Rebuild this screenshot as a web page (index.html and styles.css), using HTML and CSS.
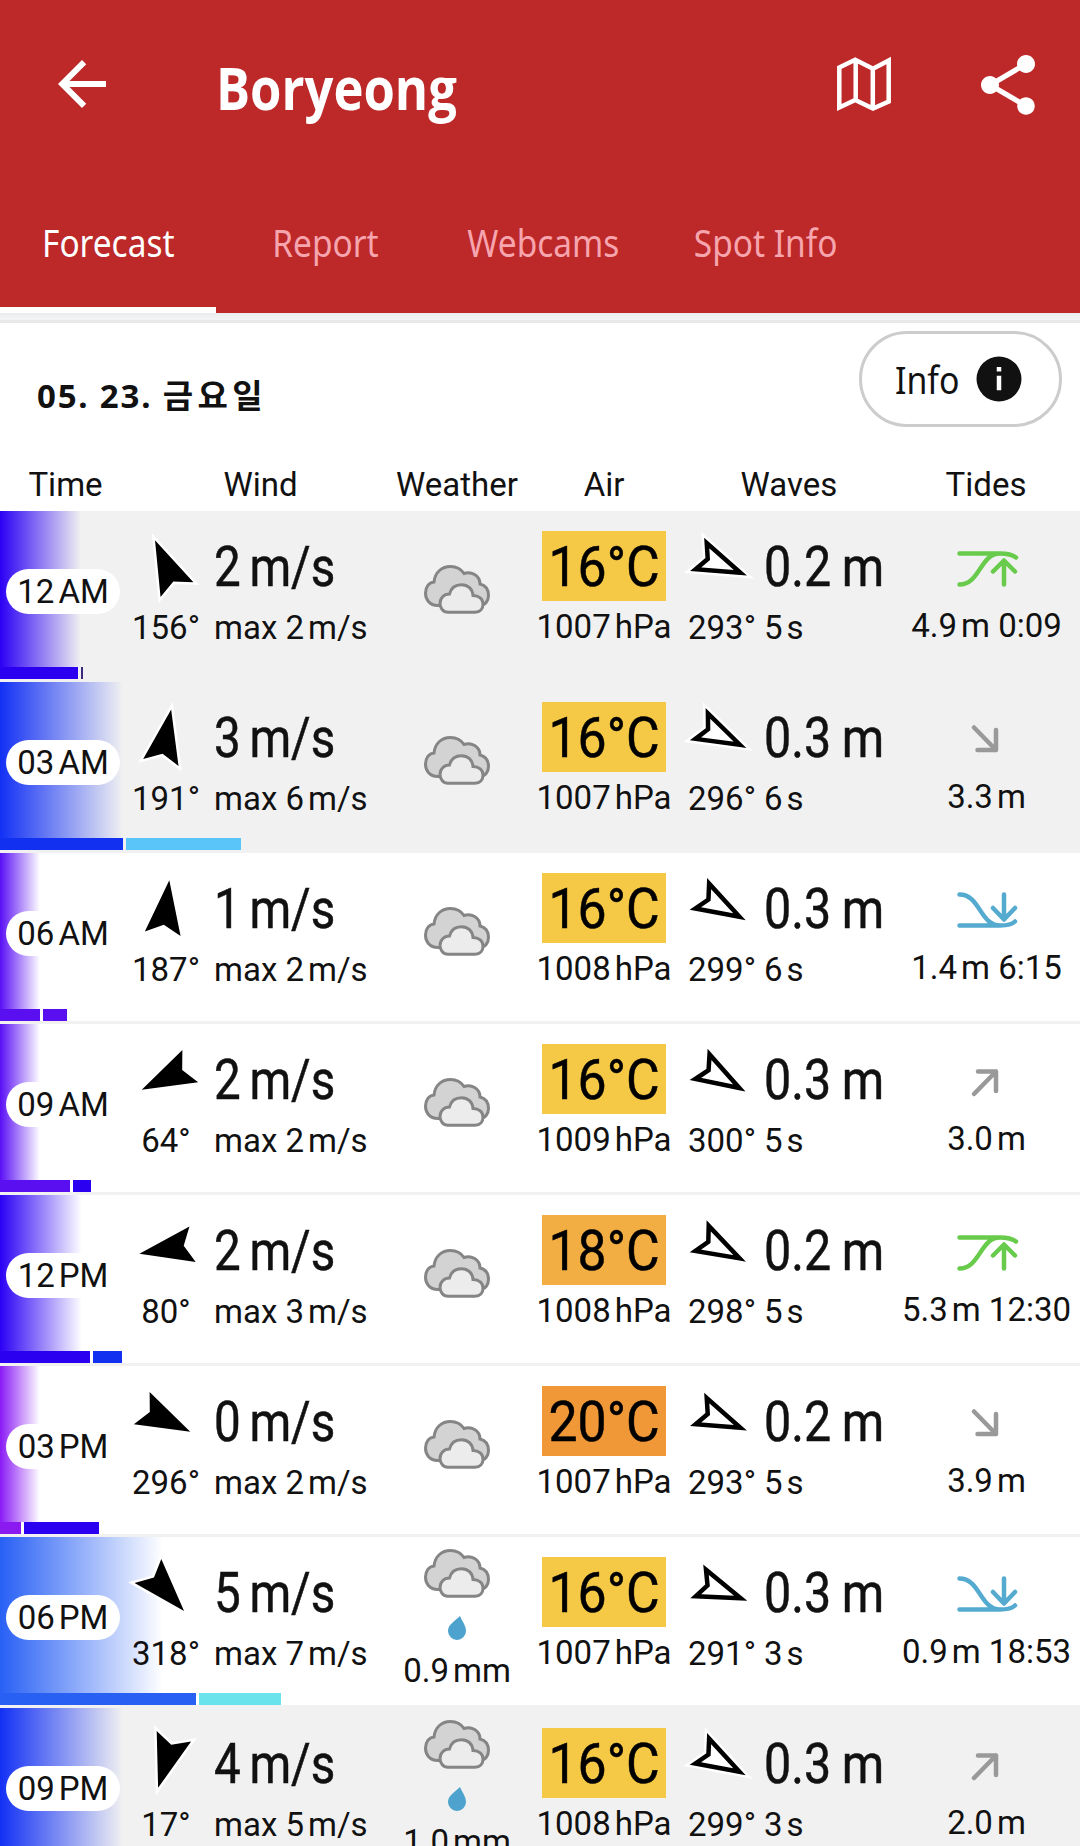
FILE: index.html
```html
<!DOCTYPE html>
<html lang="ko">
<head>
<meta charset="utf-8">
<title>Boryeong</title>
<link rel="stylesheet" href="styles.css">
</head>
<body>
<svg class="defs" aria-hidden="true">
  <symbol id="wind" viewBox="-40 -40 80 80"><path class="halo" d="M0 27L-18-27 0-18 18-27Z"/><path d="M0 27L-18-27 0-18 18-27Z"/></symbol>
  <symbol id="wave" viewBox="-40 -40 80 80"><path class="halo" d="M0 27L-18-27 0-18 18-27Z"/><path class="hollow" d="M0 20L-14.2-22.6 0-15.5 14.2-22.6Z"/></symbol>
  <symbol id="cloud" viewBox="0 0 66 49"><g stroke="#858585" stroke-width="3"><path fill="#d3d3d3" d="M14 40.5C5 40.5 1.5 34 1.5 28 1.5 22 5 17.5 10 17 11 7 18 1.5 26.5 1.5 32.5 1.5 37 4 40 8.5 47 6 56 10 56 19 62 20.5 64.5 25 64.5 30.5 64.5 36 61 40.5 56 40.5Z"/><path fill="#ececec" d="M24 47.3C19 47.3 16 43 16 38.5 16 33 20 29 25.5 29 27 23 31 19.7 37.5 19.7 44 19.7 48.5 24 49 30.5 55 30.5 59 34 59 39 59 44 56 47.3 51 47.3Z"/></g></symbol>
  <symbol id="drop" viewBox="0 0 18 24"><path fill="#4da3cd" d="M12 0C14 5 18 9.500 18 15A9 9 0 0 1 0 15C0 8.500 7 5 12 0Z"/></symbol>
  <symbol id="high" viewBox="0 0 64 40"><g class="tide green"><path d="M4.500 4.500H45C53 4.500 57 5.500 61 8.500M4.500 35.500C25 35.500 25 4.500 45 4.500M49 35.500V12M38 22.500L49 11.500 60 22.500"/></g></symbol>
  <symbol id="low" viewBox="0 0 64 40"><g class="tide blue"><path d="M4.500 34.500H45C53 34.500 57 33.500 60 30.500M4.500 3.500C25 3.500 25 34.500 45 34.500M49 3.500V28M38 17L49 28.500 60 17"/></g></symbol>
  <symbol id="fall" viewBox="0 0 64 40"><path class="tide gray" d="M19 7.500L41 30M41 10V30H22.500"/></symbol>
  <symbol id="rise" viewBox="0 0 64 40"><path class="tide gray" d="M19 32L41 9.500M41 29V9.500H23"/></symbol>
</svg>

<header class="top">
  <div class="toolbar">
    <svg class="back" viewBox="0 0 24 24"><path d="M20 11H7.830l5.590-5.590L12 4l-8 8 8 8 1.410-1.410L7.830 13H20v-2z"/></svg>
    <h1><span>Boryeong</span></h1>
    <svg class="map" viewBox="0 0 54 54"><path d="M2.300 10.500L18.200 2.800 36 11.700 51.700 3.500V44.500L36 51.500 18.200 43 2.300 50.500ZM18.700 3V43M35.800 11.500V51"/></svg>
    <svg class="share" viewBox="0 0 24 24"><path d="M18 16.080c-.76 0-1.440.3-1.960.77L8.910 12.700c.05-.23.09-.46.09-.7s-.04-.47-.09-.7l7.050-4.110c.54.5 1.250.81 2.040.81 1.660 0 3-1.340 3-3s-1.340-3-3-3-3 1.340-3 3c0 .24.04.47.09.7L8.040 9.810C7.500 9.310 6.790 9 6 9c-1.660 0-3 1.340-3 3s1.340 3 3 3c.79 0 1.500-.31 2.040-.81l7.120 4.160c-.05.21-.08.43-.08.65 0 1.610 1.310 2.920 2.920 2.920s2.920-1.310 2.920-2.920-1.310-2.920-2.920-2.920z"/></svg>
  </div>
  <nav class="tabs">
    <a class="tab active"><span>Forecast</span></a>
    <a class="tab"><span>Report</span></a>
    <a class="tab"><span>Webcams</span></a>
    <a class="tab"><span>Spot Info</span></a>
  </nav>
</header>

<div class="edge"></div>

<section class="day">
  <h2>05. 23. <span>금요일</span></h2>
  <button class="info"><span>Info</span><svg viewBox="0 0 24 24"><path d="M12 2a10 10 0 1 0 0 20 10 10 0 0 0 0-20zM13 17h-2v-6.500h2zM13 8.700h-2v-2h2z"/></svg></button>
</section>

<div class="labels"><span>Time</span><span>Wind</span><span>Weather</span><span>Air</span><span>Waves</span><span>Tides</span></div>

<main>
  <div class="row night" style="--c:#2b00f5;--w:81px">
    <div class="cells">
      <div class="time"><span>12<i>AM</i></span></div>
      <div class="dir"><svg style="transform:rotate(156deg)"><use href="#wind"/></svg><p>156°</p></div>
      <div class="speed"><b>2<i>m/s</i></b><p>max 2<i>m/s</i></p></div>
      <div class="weather"><svg class="cloud"><use href="#cloud"/></svg></div>
      <div class="air"><b><span>16°C</span></b><p>1007<i>hPa</i></p></div>
      <div class="wdir"><svg style="transform:rotate(293deg)"><use href="#wave"/></svg><p>293°</p></div>
      <div class="height"><b>0.2<i>m</i></b><p>5<i>s</i></p></div>
      <div class="tides"><svg><use href="#high"/></svg><p>4.9<i>m</i> 0:09</p></div>
    </div>
    <div class="bars"><s style="width:78px;background:#2b00f0"></s><s style="width:2px;background:#3b2a7c"></s></div>
  </div>
  <div class="row night" style="--c:#1230f5;--w:123px">
    <div class="cells">
      <div class="time"><span>03<i>AM</i></span></div>
      <div class="dir"><svg style="transform:rotate(191deg)"><use href="#wind"/></svg><p>191°</p></div>
      <div class="speed"><b>3<i>m/s</i></b><p>max 6<i>m/s</i></p></div>
      <div class="weather"><svg class="cloud"><use href="#cloud"/></svg></div>
      <div class="air"><b><span>16°C</span></b><p>1007<i>hPa</i></p></div>
      <div class="wdir"><svg style="transform:rotate(296deg)"><use href="#wave"/></svg><p>296°</p></div>
      <div class="height"><b>0.3<i>m</i></b><p>6<i>s</i></p></div>
      <div class="tides"><svg><use href="#fall"/></svg><p>3.3<i>m</i></p></div>
    </div>
    <div class="bars"><s style="width:123px;background:#1230f0"></s><s style="width:115px;background:#5ac5f9"></s></div>
  </div>
  <div class="row" style="--c:#5a0ff5;--w:40px">
    <div class="cells">
      <div class="time"><span>06<i>AM</i></span></div>
      <div class="dir"><svg style="transform:rotate(187deg)"><use href="#wind"/></svg><p>187°</p></div>
      <div class="speed"><b>1<i>m/s</i></b><p>max 2<i>m/s</i></p></div>
      <div class="weather"><svg class="cloud"><use href="#cloud"/></svg></div>
      <div class="air"><b><span>16°C</span></b><p>1008<i>hPa</i></p></div>
      <div class="wdir"><svg style="transform:rotate(299deg)"><use href="#wave"/></svg><p>299°</p></div>
      <div class="height"><b>0.3<i>m</i></b><p>6<i>s</i></p></div>
      <div class="tides"><svg><use href="#low"/></svg><p>1.4<i>m</i> 6:15</p></div>
    </div>
    <div class="bars"><s style="width:40px;background:#5a0ff0"></s><s style="width:24px;background:#5a0ff0"></s></div>
  </div>
  <div class="row" style="--c:#5a0ff5;--w:40px">
    <div class="cells">
      <div class="time"><span>09<i>AM</i></span></div>
      <div class="dir"><svg style="transform:rotate(64deg)"><use href="#wind"/></svg><p>64°</p></div>
      <div class="speed"><b>2<i>m/s</i></b><p>max 2<i>m/s</i></p></div>
      <div class="weather"><svg class="cloud"><use href="#cloud"/></svg></div>
      <div class="air"><b><span>16°C</span></b><p>1009<i>hPa</i></p></div>
      <div class="wdir"><svg style="transform:rotate(300deg)"><use href="#wave"/></svg><p>300°</p></div>
      <div class="height"><b>0.3<i>m</i></b><p>5<i>s</i></p></div>
      <div class="tides"><svg><use href="#rise"/></svg><p>3.0<i>m</i></p></div>
    </div>
    <div class="bars"><s style="width:70px;background:#5a0ff0"></s><s style="width:18px;background:#2b00f0"></s></div>
  </div>
  <div class="row" style="--c:#2b00f5;--w:82px">
    <div class="cells">
      <div class="time"><span>12<i>PM</i></span></div>
      <div class="dir"><svg style="transform:rotate(80deg)"><use href="#wind"/></svg><p>80°</p></div>
      <div class="speed"><b>2<i>m/s</i></b><p>max 3<i>m/s</i></p></div>
      <div class="weather"><svg class="cloud"><use href="#cloud"/></svg></div>
      <div class="air mild"><b><span>18°C</span></b><p>1008<i>hPa</i></p></div>
      <div class="wdir"><svg style="transform:rotate(298deg)"><use href="#wave"/></svg><p>298°</p></div>
      <div class="height"><b>0.2<i>m</i></b><p>5<i>s</i></p></div>
      <div class="tides"><svg><use href="#high"/></svg><p>5.3<i>m</i> 12:30</p></div>
    </div>
    <div class="bars"><s style="width:90px;background:#2b00f0"></s><s style="width:29px;background:#1230f0"></s></div>
  </div>
  <div class="row" style="--c:#8a1af5;--w:40px">
    <div class="cells">
      <div class="time"><span>03<i>PM</i></span></div>
      <div class="dir"><svg style="transform:rotate(296deg)"><use href="#wind"/></svg><p>296°</p></div>
      <div class="speed"><b>0<i>m/s</i></b><p>max 2<i>m/s</i></p></div>
      <div class="weather"><svg class="cloud"><use href="#cloud"/></svg></div>
      <div class="air warm"><b><span>20°C</span></b><p>1007<i>hPa</i></p></div>
      <div class="wdir"><svg style="transform:rotate(293deg)"><use href="#wave"/></svg><p>293°</p></div>
      <div class="height"><b>0.2<i>m</i></b><p>5<i>s</i></p></div>
      <div class="tides"><svg><use href="#fall"/></svg><p>3.9<i>m</i></p></div>
    </div>
    <div class="bars"><s style="width:21px;background:#8a1af0"></s><s style="width:75px;background:#2b00f0"></s></div>
  </div>
  <div class="row" style="--c:#2860f5;--w:163px">
    <div class="cells">
      <div class="time"><span>06<i>PM</i></span></div>
      <div class="dir"><svg style="transform:rotate(318deg)"><use href="#wind"/></svg><p>318°</p></div>
      <div class="speed"><b>5<i>m/s</i></b><p>max 7<i>m/s</i></p></div>
      <div class="weather rain"><svg class="cloud"><use href="#cloud"/></svg><svg class="drop"><use href="#drop"/></svg><p>0.9<i>mm</i></p></div>
      <div class="air"><b><span>16°C</span></b><p>1007<i>hPa</i></p></div>
      <div class="wdir"><svg style="transform:rotate(291deg)"><use href="#wave"/></svg><p>291°</p></div>
      <div class="height"><b>0.3<i>m</i></b><p>3<i>s</i></p></div>
      <div class="tides"><svg><use href="#low"/></svg><p>0.9<i>m</i> 18:53</p></div>
    </div>
    <div class="bars"><s style="width:196px;background:#2860f3"></s><s style="width:82px;background:#6be3ec"></s></div>
  </div>
  <div class="row night" style="--c:#1230f5;--w:123px">
    <div class="cells">
      <div class="time"><span>09<i>PM</i></span></div>
      <div class="dir"><svg style="transform:rotate(17deg)"><use href="#wind"/></svg><p>17°</p></div>
      <div class="speed"><b>4<i>m/s</i></b><p>max 5<i>m/s</i></p></div>
      <div class="weather rain"><svg class="cloud"><use href="#cloud"/></svg><svg class="drop"><use href="#drop"/></svg><p>1.0<i>mm</i></p></div>
      <div class="air"><b><span>16°C</span></b><p>1008<i>hPa</i></p></div>
      <div class="wdir"><svg style="transform:rotate(299deg)"><use href="#wave"/></svg><p>299°</p></div>
      <div class="height"><b>0.3<i>m</i></b><p>3<i>s</i></p></div>
      <div class="tides"><svg><use href="#rise"/></svg><p>2.0<i>m</i></p></div>
    </div>
  </div>
</main>
</body>
</html>
```
FILE: styles.css
```css
* { box-sizing: border-box; margin: 0; padding: 0; }
body {
  width: 1080px;
  height: 1846px;
  overflow: hidden;
  background: #fff;
  color: #111;
  font-family: Roboto, "Noto Sans CJK KR", sans-serif;
  font-size: 33px;
}
svg { display: block; overflow: visible; flex: none; }
.defs { display: none; }

/* header */
.top { height: 313px; background: #bd2829; display: flex; flex-direction: column; }
.toolbar { height: 168px; display: flex; align-items: center; padding: 0 36px 0 46px; fill: #fff; }
.back { width: 72px; height: 72px; }
h1 { flex: 1; margin-left: 98px; padding-top: 6px; font: 700 59px/80px "Open Sans", sans-serif; color: #fff; }
h1 span { display: inline-block; transform: scaleX(.86); transform-origin: left; }
.map { width: 54px; height: 54px; margin-right: 81px; fill: none; stroke: #fff; stroke-width: 4.5; }
.share { width: 72px; height: 72px; margin-top: 2px; }
.tabs { height: 145px; display: flex; }
.tab {
  width: 218px;
  border-bottom: 6px solid transparent;
  text-align: center;
  font: 38px/52px "Noto Sans", sans-serif;
  padding-top: 48px;
  color: #f6a5ae;
}
.tab span { display: inline-block; transform: scaleX(.88); margin: 0 -20px; }
.tab.active { width: 216px; color: #fff; border-color: #fff; }
.tab:nth-child(3) { width: 219px; }
.tab:nth-child(4) { width: 225px; }
.edge { height: 10px; background: linear-gradient(#ebeced, #f3f4f5 7px, #e8e8e8 7px); }

/* date and info button */
.day { height: 139px; padding: 8px 18px 0 37px; display: flex; justify-content: space-between; }
h2 { font: 700 33px/48px "Noto Sans", "Noto Sans CJK KR", sans-serif; letter-spacing: 1.8px; padding-top: 41px; }
h2 span { letter-spacing: 4.5px; }
.info {
  width: 203px;
  height: 96px;
  border: 3px solid #ccc;
  border-radius: 48px;
  background: #fff;
  color: #111;
  display: flex;
  align-items: center;
  padding-left: 33px;
  font: 38px/52px "Noto Sans", sans-serif;
}
.info span { width: 63px; transform: scaleX(.89); transform-origin: left; }
.info svg { width: 54px; height: 54px; margin-left: 14px; fill: #111; }

.labels { height: 49px; display: grid; grid-template-columns: 131px 259px 134px 160px 210px 184px; text-align: center; line-height: 45px; }

/* forecast rows */
.row {
  height: 171px;
  border-bottom: 3px solid #f1f1f1;
  background: linear-gradient(to right, var(--c), transparent) no-repeat 0 0 / var(--w) 156px;
}
.night { background-color: #f1f1f1; }
.cells { height: 156px; display: grid; grid-template-columns: 125px 82px 183px 134px 160px 76px 130px 190px; }
.bars { height: 12px; display: flex; gap: 3px; }
.bars s { height: 12px; }
i { font-style: normal; margin-left: 4px; }
p { line-height: 40px; white-space: nowrap; }
b { display: block; font-weight: 400; font-size: 55px; line-height: 72px; height: 70px; margin-bottom: 7px; white-space: nowrap; -webkit-text-stroke: .5px; }

.time { padding: 58px 0 0 6px; }
.time span { display: block; width: 114px; height: 45px; border-radius: 23px; background: #fff; line-height: 45px; text-align: center; }
.dir, .air, .tides, .weather { display: flex; flex-direction: column; align-items: center; }
.dir { padding-top: 14px; }
.dir svg, .wdir svg { width: 80px; height: 80px; margin-bottom: 3px; }
.halo { stroke: #fff; stroke-width: 5; stroke-miterlimit: 10; }
.hollow { fill: #fff; stroke: #000; stroke-width: 4.5; stroke-miterlimit: 10; }
.speed { padding: 20px 0 0 7px; }
.speed b, .height b { transform: scaleX(.865); transform-origin: left; }
.height b { transform: scaleX(.88); }
.speed b i { margin-left: 10px; }
.height b i { margin-left: 12px; }
.weather { padding-top: 54px; }
.cloud { width: 66px; height: 49px; }
.rain { padding-top: 12px; }
.drop { width: 18px; height: 24px; margin: 18px 0 11px; }
.air { padding-top: 20px; }
.air b { width: 124px; background: #f5c945; color: #000; text-align: center; margin-bottom: 6px; }
.air b span { display: inline-block; transform: scaleX(.94); margin: 0 -12px; }
.mild b { background: #f2ae42; }
.warm b { background: #f09838; }
.wdir { padding-top: 14px; }
.wdir svg { margin-left: -2px; }
.wdir p { padding-left: 4px; }
.height { padding: 20px 0 0 4px; }
.tides { padding: 38px 0 0 3px; }
.tides svg { width: 64px; height: 40px; margin-bottom: 17px; }
.tide { fill: none; stroke-width: 4.5; stroke-linecap: round; stroke-linejoin: round; }
.green { stroke: #68cb4c; }
.blue { stroke: #55aad0; }
.gray { stroke: #999; }
```
